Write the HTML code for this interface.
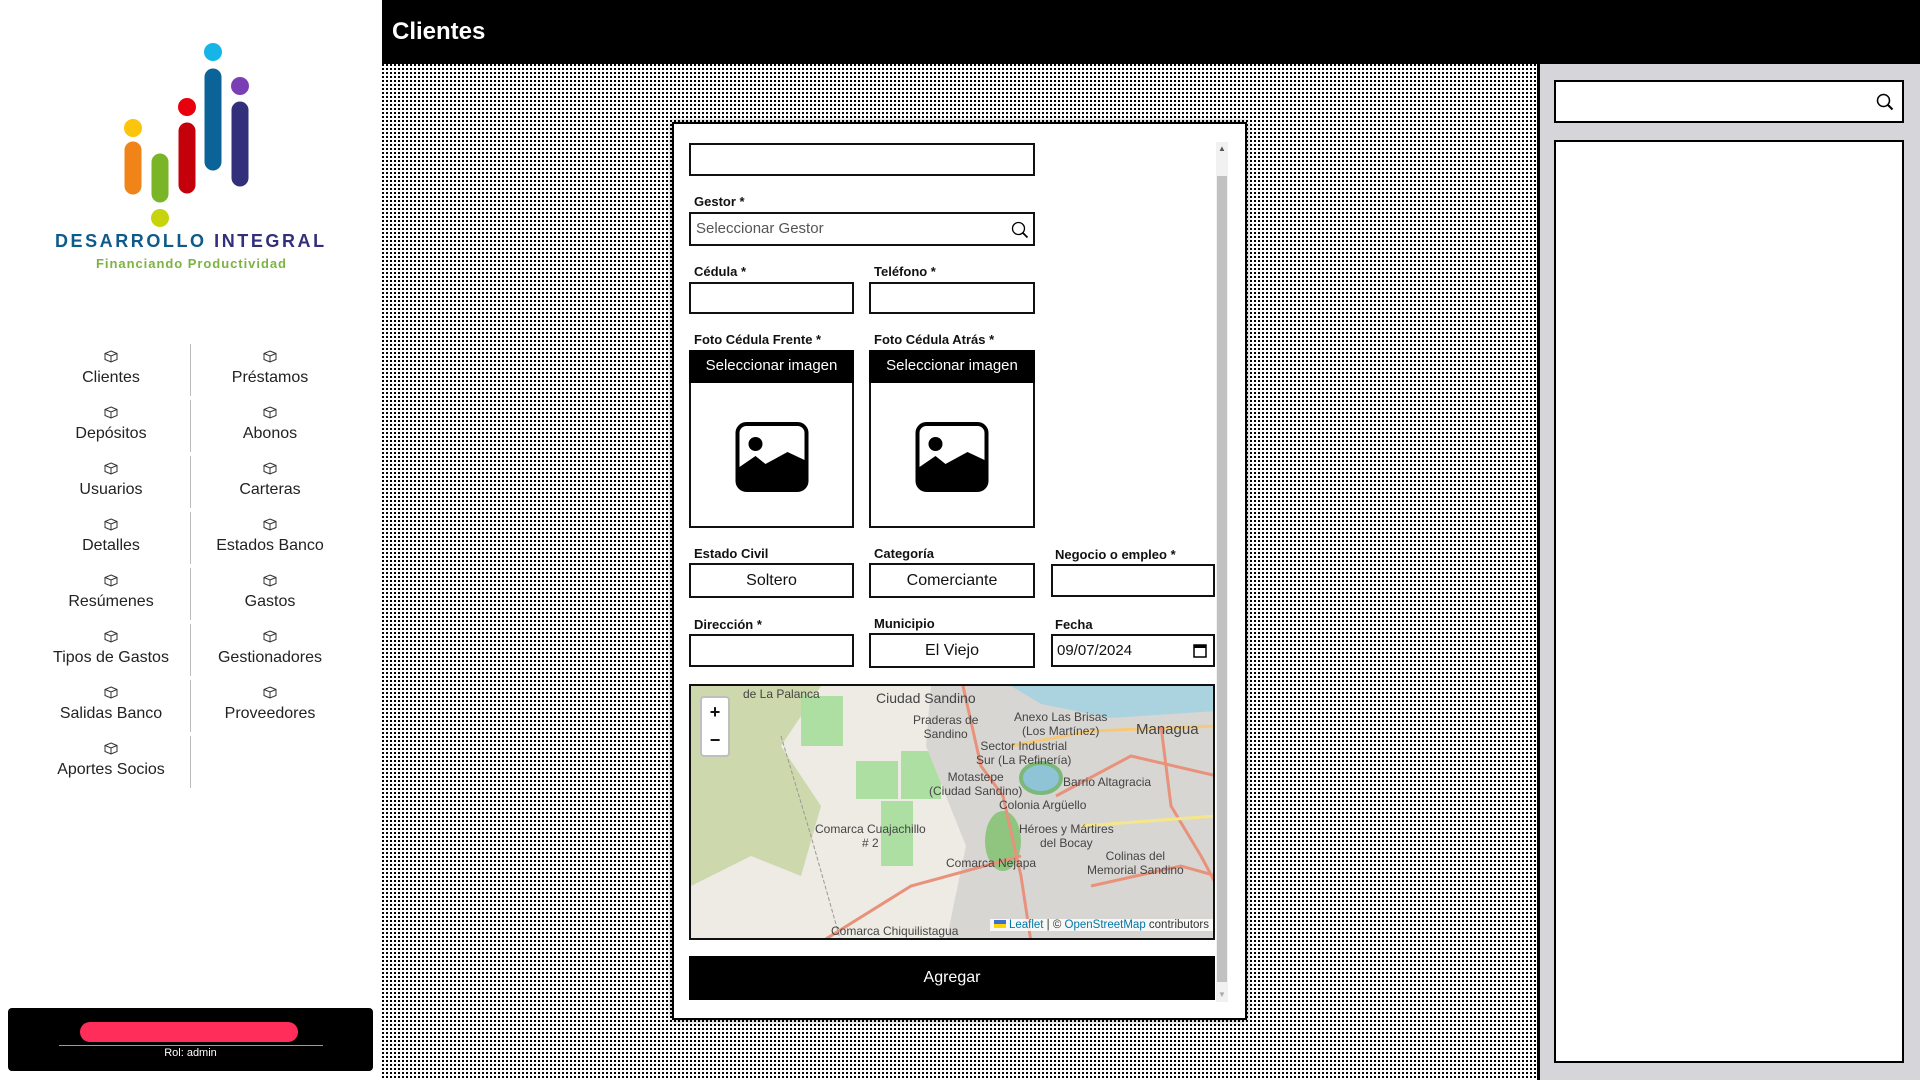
<!DOCTYPE html>
<html><head><meta charset="utf-8"><style>
*{box-sizing:border-box;margin:0;padding:0}
body{width:1920px;height:1080px;position:relative;overflow:hidden;font-family:"Liberation Sans",sans-serif;background:#fff;color:#111}
.abs{position:absolute}
#side{left:0;top:0;width:382px;height:1080px;background:#fff}
#hdr{left:382px;top:0;width:1538px;height:64px;background:#000;color:#fff;font-weight:bold;font-size:24px;padding:18px 0 0 10px}
#main{left:382px;top:64px;width:1155px;height:1016px;background-color:#000;
background-image:linear-gradient(to right,transparent 2px,#fff 2px),linear-gradient(to bottom,transparent 2px,#fff 2px);background-size:4px 4px}
#right{left:1537px;top:64px;width:383px;height:1016px;background:#d6d6da;border-left:3px solid #000}
.bx{border:2px solid #000;background:#fff}
.lbl{position:absolute;font-size:13px;font-weight:bold;color:#111}
.inp{position:absolute;border:2px solid #111;background:#fff;font-size:16px;text-align:center;line-height:36px}
.nav{position:absolute;width:160px;text-align:center;font-size:16px;color:#222}
.nav svg{display:block;margin:0 auto 6px}
.dv{position:absolute;left:190px;width:1px;height:52px;background:#bbb}
.ml{position:absolute;font-size:12px;color:#444;white-space:nowrap}
.img{position:absolute;left:50%;top:70px;margin-left:-40px}
</style></head><body>
<div id="side" class="abs">
<svg class="abs" style="left:0;top:0" width="382" height="280">
<g stroke-linecap="round" stroke-width="17">
<line x1="133" y1="150" x2="133" y2="186" stroke="#f08418"/>
<line x1="160" y1="162" x2="160" y2="194" stroke="#7ab527"/>
<line x1="187" y1="131" x2="187" y2="185" stroke="#c4000a"/>
<line x1="213" y1="77" x2="213" y2="162" stroke="#0b6397"/>
<line x1="240" y1="110" x2="240" y2="178" stroke="#32307a"/>
</g>
<circle cx="133" cy="128" r="9" fill="#fcc40a"/><circle cx="160" cy="218" r="9" fill="#c6d40c"/>
<circle cx="187" cy="107" r="9" fill="#e8000c"/><circle cx="213" cy="52" r="9" fill="#16b5e8"/>
<circle cx="240" cy="86" r="9" fill="#7b3fb5"/>
<text x="55" y="247" font-family="Liberation Sans" font-weight="bold" font-size="18" letter-spacing="1.9" textLength="271" fill="#0e5a8a">DESARROLLO <tspan fill="#32307a">INTEGRAL</tspan></text>
<text x="96" y="268" font-family="Liberation Sans" font-weight="bold" font-size="13" textLength="190" fill="#7cb342">Financiando Productividad</text>
</svg>
<div id="navs"></div>
<div class="abs" style="left:8px;top:1008px;width:365px;height:63px;background:#000;border-radius:4px">
<div class="abs" style="left:72px;top:14px;width:218px;height:20px;background:#ff2d5a;border-radius:10px"></div>
<div class="abs" style="left:51px;top:37px;width:264px;height:1px;background:#999"></div>
<div class="abs" style="left:0;top:39px;width:365px;text-align:center;color:#fff;font-size:11px">Rol: admin</div>
</div>
</div>
<div id="hdr" class="abs">Clientes</div>
<div id="main" class="abs"></div>
<div id="right" class="abs">
<div class="abs bx" style="left:14px;top:16px;width:350px;height:43px">
<svg class="abs" style="right:8px;top:11px" width="18" height="18" viewBox="0 0 18 18"><circle cx="7.5" cy="7.5" r="6" fill="none" stroke="#000" stroke-width="1.5"/><line x1="12" y1="12" x2="16.5" y2="16.5" stroke="#000" stroke-width="2"/></svg></div>
<div class="abs bx" style="left:14px;top:76px;width:350px;height:923px"></div>
</div>
<!-- modal -->
<div class="abs" style="left:672px;top:122px;width:575px;height:898px;background:#fff;border:2px solid #000;box-shadow:0 0 6px rgba(0,0,0,.4)">
<div class="abs" style="left:542px;top:18px;width:12px;height:860px;background:#f1f1f1"></div>
<div class="abs" style="left:543px;top:52px;width:10px;height:806px;background:#c1c1c1"></div>
<div class="abs" style="left:544px;top:20px;font-size:8px;color:#555">▲</div>
<div class="abs" style="left:544px;top:866px;font-size:8px;color:#aaa">▼</div>
</div>
<div class="inp" style="left:689px;top:143px;width:346px;height:33px"></div>
<div class="lbl" style="left:694px;top:194px">Gestor *</div>
<div class="inp" style="left:689px;top:212px;width:346px;height:34px;text-align:left;padding-left:5px;line-height:30px;color:#555;font-size:15px">Seleccionar Gestor
<svg class="abs" style="right:4px;top:7px" width="18" height="18" viewBox="0 0 18 18"><circle cx="7.5" cy="7.5" r="6" fill="none" stroke="#000" stroke-width="1.3"/><line x1="12" y1="12" x2="16.5" y2="16.5" stroke="#000" stroke-width="1.8"/></svg></div>
<div class="lbl" style="left:694px;top:264px">Cédula *</div>
<div class="lbl" style="left:874px;top:264px">Teléfono *</div>
<div class="inp" style="left:689px;top:282px;width:165px;height:32px"></div>
<div class="inp" style="left:869px;top:282px;width:166px;height:32px"></div>
<div class="lbl" style="left:694px;top:332px">Foto Cédula Frente *</div>
<div class="lbl" style="left:874px;top:332px">Foto Cédula Atrás *</div>
<div class="inp" style="left:689px;top:350px;width:165px;height:178px">
<div style="background:#000;color:#fff;height:33px;line-height:32px;font-size:15px;margin:-2px -2px 0">Seleccionar imagen</div>
<svg class="img" width="80" height="70" viewBox="0 0 73 70"><rect x="2" y="2" width="69" height="66" rx="9" fill="none" stroke="#000" stroke-width="4"/><path d="M4 45 L20 34 L30 42 L52 30 L69 38 L69 60 Q69 68 61 68 L12 68 Q4 68 4 60Z" fill="#000"/><circle cx="20" cy="22" r="7" fill="#000"/></svg></div>
<div class="inp" style="left:869px;top:350px;width:166px;height:178px">
<div style="background:#000;color:#fff;height:33px;line-height:32px;font-size:15px;margin:-2px -2px 0">Seleccionar imagen</div>
<svg class="img" width="80" height="70" viewBox="0 0 73 70"><rect x="2" y="2" width="69" height="66" rx="9" fill="none" stroke="#000" stroke-width="4"/><path d="M4 45 L20 34 L30 42 L52 30 L69 38 L69 60 Q69 68 61 68 L12 68 Q4 68 4 60Z" fill="#000"/><circle cx="20" cy="22" r="7" fill="#000"/></svg></div>
<div class="lbl" style="left:694px;top:546px">Estado Civil</div>
<div class="lbl" style="left:874px;top:546px">Categoría</div>
<div class="lbl" style="left:1055px;top:547px">Negocio o empleo *</div>
<div class="inp" style="left:689px;top:563px;width:165px;height:35px;line-height:31px">Soltero</div>
<div class="inp" style="left:869px;top:563px;width:166px;height:35px;line-height:31px">Comerciante</div>
<div class="inp" style="left:1051px;top:564px;width:164px;height:33px"></div>
<div class="lbl" style="left:694px;top:617px">Dirección *</div>
<div class="lbl" style="left:874px;top:616px">Municipio</div>
<div class="lbl" style="left:1055px;top:617px">Fecha</div>
<div class="inp" style="left:689px;top:634px;width:165px;height:33px"></div>
<div class="inp" style="left:869px;top:633px;width:166px;height:35px;line-height:31px">El Viejo</div>
<div class="inp" style="left:1051px;top:634px;width:164px;height:33px;text-align:left;padding-left:4px;line-height:29px;font-size:15px">09/07/2024
<svg class="abs" style="right:6px;top:7px" width="14" height="15"><rect x="1" y="2" width="12" height="12" fill="none" stroke="#000" stroke-width="1.5"/><rect x="1" y="2" width="12" height="3" fill="#000"/></svg></div>
<!-- map -->
<div class="abs" style="left:689px;top:684px;width:526px;height:256px;border:2px solid #111;overflow:hidden;background:#eeebe4">
<svg width="526" height="256" style="position:absolute;left:0;top:0">
<path d="M0 0 L130 0 L90 60 L130 120 L110 190 L60 170 L0 200Z" fill="#cdd9ac"/>
<rect x="110" y="10" width="42" height="50" fill="#addfa3"/>
<rect x="165" y="75" width="42" height="38" fill="#addfa3"/>
<rect x="210" y="65" width="40" height="48" fill="#addfa3"/>
<rect x="190" y="115" width="32" height="65" fill="#addfa3"/>
<path d="M240 0 L526 0 L526 256 L255 256 L275 160 L235 60Z" fill="#d8d6d3"/>
<path d="M320 0 L526 0 L526 25 L420 32 L350 18Z" fill="#aad3df"/>
<ellipse cx="350" cy="92" rx="20" ry="15" fill="#8ec4d6" stroke="#7cb87a" stroke-width="4"/>
<ellipse cx="312" cy="155" rx="18" ry="30" fill="#8fc57f"/>
<path d="M272 0 L290 80 L312 110 L330 190 L340 256" stroke="#e8927c" stroke-width="3" fill="none"/>
<path d="M130 256 L220 200 L330 170" stroke="#e8927c" stroke-width="3" fill="none"/>
<path d="M320 60 L400 45 L526 40" stroke="#f6c97a" stroke-width="3" fill="none"/>
<path d="M365 110 L440 70 L526 90" stroke="#e8927c" stroke-width="3" fill="none"/>
<path d="M470 40 L480 120 L510 170 L526 200" stroke="#e8927c" stroke-width="3" fill="none"/>
<path d="M390 140 L526 130" stroke="#f6e68a" stroke-width="3" fill="none"/>
<path d="M400 200 L490 180 L526 190" stroke="#e8927c" stroke-width="3" fill="none"/>
<path d="M90 50 L120 150 L150 256" stroke="#999" stroke-width="1" fill="none" stroke-dasharray="4 2"/>
</svg>
<div class="abs" style="left:9px;top:10px;width:30px;height:61px;background:#fff;border:2px solid rgba(0,0,0,.25);border-radius:4px;font-size:18px;font-weight:bold;text-align:center;line-height:28px">+<br>−</div>
<div class="ml" style="left:52px;top:1px">de La Palanca</div>
<div class="ml" style="left:185px;top:4px;font-size:14px">Ciudad Sandino</div>
<div class="ml" style="left:222px;top:27px;text-align:center">Praderas de<br>Sandino</div>
<div class="ml" style="left:323px;top:24px;text-align:center">Anexo Las Brisas<br>(Los Martínez)</div>
<div class="ml" style="left:445px;top:35px;font-size:15px">Managua</div>
<div class="ml" style="left:285px;top:53px;text-align:center">Sector Industrial<br>Sur (La Refinería)</div>
<div class="ml" style="left:238px;top:84px;text-align:center">Motastepe<br>(Ciudad Sandino)</div>
<div class="ml" style="left:372px;top:89px">Barrio Altagracia</div>
<div class="ml" style="left:308px;top:112px">Colonia Argüello</div>
<div class="ml" style="left:124px;top:136px;text-align:center">Comarca Cuajachillo<br># 2</div>
<div class="ml" style="left:328px;top:136px;text-align:center">Héroes y Mártires<br>del Bocay</div>
<div class="ml" style="left:255px;top:170px">Comarca Nejapa</div>
<div class="ml" style="left:396px;top:163px;text-align:center">Colinas del<br>Memorial Sandino</div>
<div class="ml" style="left:140px;top:238px">Comarca Chiquilistagua</div>
<div class="ml" style="right:0;top:233px;background:rgba(255,255,255,.8);padding:0 4px;font-size:11.5px;color:#333"><span style="display:inline-block;width:12px;height:8px;background:linear-gradient(#3b6fd1 50%,#ffd500 50%)"></span> <span style="color:#0078a8">Leaflet</span> | © <span style="color:#0078a8">OpenStreetMap</span> contributors</div>
</div>
<div class="abs" style="left:689px;top:956px;width:526px;height:44px;background:#000;color:#fff;font-size:16px;text-align:center;line-height:44px">Agregar</div>
<script>
var L=["Clientes","Préstamos","Depósitos","Abonos","Usuarios","Carteras","Detalles","Estados Banco","Resúmenes","Gastos","Tipos de Gastos","Gestionadores","Salidas Banco","Proveedores","Aportes Socios"];
var h="";
var ic='<svg width="14" height="13" viewBox="0 0 14 13"><path d="M7 1 L13 3.5 L13 9.5 L7 12 L1 9.5 L1 3.5Z M1 3.5 L7 6 L13 3.5 M7 6 L7 12" fill="none" stroke="#333" stroke-width="1"/></svg>';
for(var i=0;i<L.length;i++){var r=Math.floor(i/2),c=i%2;var y=350+r*56;
h+='<div class="nav" style="left:'+(c?190:31)+'px;top:'+y+'px">'+ic+L[i]+'</div>';
if(c==0)h+='<div class="dv" style="top:'+(y-6)+'px"></div>';}
document.getElementById("navs").innerHTML=h;
</script>
</body></html>
